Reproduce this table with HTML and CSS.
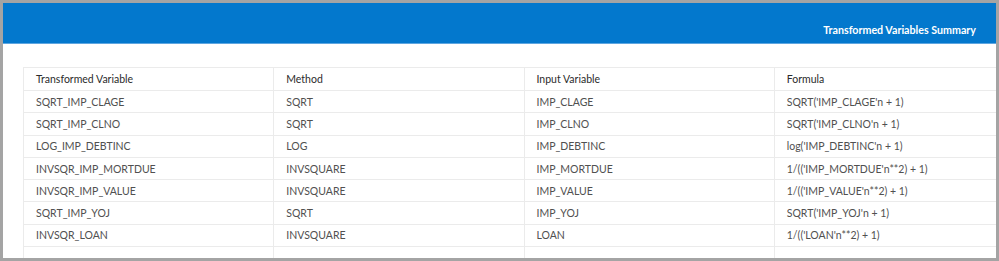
FILE: index.html
```html
<!DOCTYPE html>
<html>
<head>
<meta charset="utf-8">
<link rel="stylesheet" href="styles.css">
</head>
<body>
<div class="frame">
  <div class="banner"><span class="title">Transformed Variables Summary</span></div>
  <div class="content">
    <table class="summary">
      <thead>
        <tr><th>Transformed Variable</th><th>Method</th><th>Input Variable</th><th>Formula</th></tr>
      </thead>
      <tbody>
        <tr><td>SQRT_IMP_CLAGE</td><td>SQRT</td><td>IMP_CLAGE</td><td>SQRT('IMP_CLAGE'n + 1)</td></tr>
        <tr><td>SQRT_IMP_CLNO</td><td>SQRT</td><td>IMP_CLNO</td><td>SQRT('IMP_CLNO'n + 1)</td></tr>
        <tr><td>LOG_IMP_DEBTINC</td><td>LOG</td><td>IMP_DEBTINC</td><td>log('IMP_DEBTINC'n + 1)</td></tr>
        <tr><td>INVSQR_IMP_MORTDUE</td><td>INVSQUARE</td><td>IMP_MORTDUE</td><td>1/(('IMP_MORTDUE'n**2) + 1)</td></tr>
        <tr><td>INVSQR_IMP_VALUE</td><td>INVSQUARE</td><td>IMP_VALUE</td><td>1/(('IMP_VALUE'n**2) + 1)</td></tr>
        <tr><td>SQRT_IMP_YOJ</td><td>SQRT</td><td>IMP_YOJ</td><td>SQRT('IMP_YOJ'n + 1)</td></tr>
        <tr><td>INVSQR_LOAN</td><td>INVSQUARE</td><td>LOAN</td><td>1/(('LOAN'n**2) + 1)</td></tr>
        <tr><td>&nbsp;</td><td>&nbsp;</td><td>&nbsp;</td><td>&nbsp;</td></tr>
      </tbody>
    </table>
  </div>
</div>
</body>
</html>
```
FILE: styles.css
```css
html, body {
  margin: 0;
  padding: 0;
}
body {
  background: #a4a4a4;
  width: 999px;
  height: 261px;
  overflow: hidden;
}
.frame {
  margin: 3px;
  height: 255px;
  background: #ffffff;
  overflow: hidden;
  font-family: Lato, "Open Sans", sans-serif;
}
.banner {
  background: #0378cd;
  border-bottom: 1px solid #5ea6e0;
  display: flex;
  justify-content: flex-end;
  align-items: flex-end;
  padding: 0 20px 7px 0;
  box-sizing: border-box;
  height: 41px;
}
.title {
  color: #ffffff;
  font-weight: 700;
  font-size: 10.7px;
}
.content {
  padding: 23px 0 0 20px;
}
.summary {
  border-collapse: collapse;
  table-layout: fixed;
  width: 1002px;
  font-size: 10.5px;
  color: #505050;
}
.summary th,
.summary td {
  border: 1px solid #ebebeb;
  text-align: left;
  padding: 0 12px;
  height: 21.3px;
  white-space: nowrap;
}
.summary th {
  font-weight: 400;
  color: #2b2b2b;
  height: 22px;
}
```
